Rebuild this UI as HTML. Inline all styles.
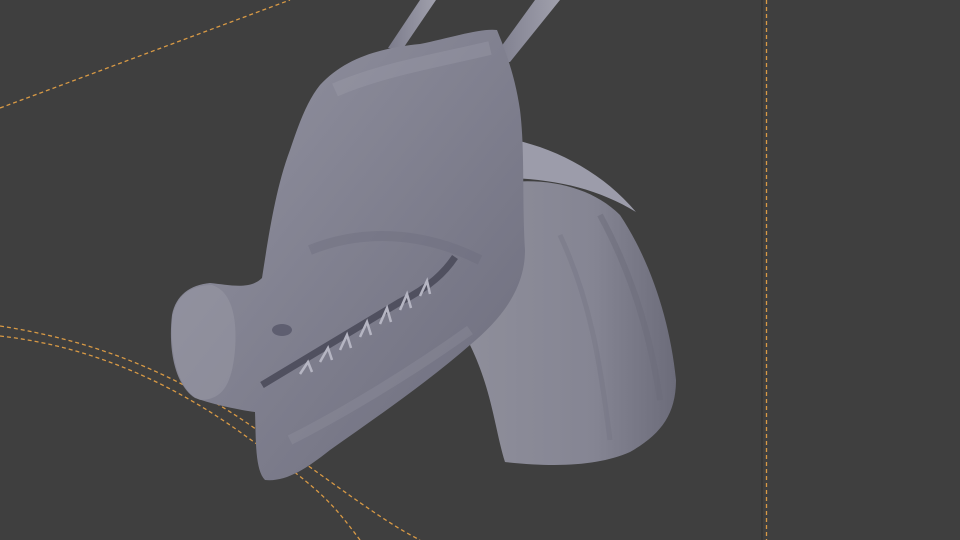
<!DOCTYPE html>
<html><head><meta charset="utf-8"><style>
html,body{margin:0;padding:0;background:#3f3f3f;width:960px;height:540px;overflow:hidden}
</style></head><body>
<svg width="960" height="540" viewBox="0 0 960 540" xmlns="http://www.w3.org/2000/svg">
<defs>
<linearGradient id="g" x1="0" y1="0" x2="1" y2="1">
<stop offset="0" stop-color="#9494a2"/><stop offset="0.5" stop-color="#80808f"/><stop offset="1" stop-color="#6c6c7c"/>
</linearGradient>
<linearGradient id="n" x1="0" y1="0" x2="1" y2="0">
<stop offset="0" stop-color="#8e8e9a"/><stop offset="0.6" stop-color="#858593"/><stop offset="1" stop-color="#6c6c7a"/>
</linearGradient>
<linearGradient id="h" x1="0" y1="0" x2="1" y2="0">
<stop offset="0" stop-color="#7c7c8c"/><stop offset="1" stop-color="#a0a0ac"/>
</linearGradient>
</defs>
<rect width="960" height="540" fill="#3f3f3f"/>
<line x1="762" y1="0" x2="762" y2="540" stroke="#343434" stroke-width="1.5"/>
<line x1="766.5" y1="0" x2="766.5" y2="540" stroke="#d99a45" stroke-width="1.3" stroke-dasharray="4,3"/>
<path d="M0,108 L290,0" stroke="#d99a45" stroke-width="1.3" stroke-dasharray="4,3" fill="none"/>
<path d="M0,326 C90,340 170,370 250,425 S380,520 420,540" stroke="#d99a45" stroke-width="1.3" stroke-dasharray="4,3" fill="none"/>
<path d="M0,336 C80,345 160,375 240,432 S330,500 360,540" stroke="#d99a45" stroke-width="1.3" stroke-dasharray="4,3" fill="none"/>
<path d="M388,48 L420,0 L436,0 L402,50 Z" fill="url(#h)"/>
<path d="M490,62 L535,0 L560,0 L510,62 Z" fill="url(#h)"/>
<path d="M490,185 C540,175 590,185 620,215 C650,260 670,320 676,380 C676,415 660,435 630,452 C600,465 560,468 505,462 C495,430 492,390 470,345 Z" fill="url(#n)"/>
<path d="M600,215 C630,270 650,330 660,400" stroke="#6c6c7a" stroke-width="6" fill="none" opacity="0.5"/>
<path d="M560,235 C590,300 600,360 610,440" stroke="#747482" stroke-width="5" fill="none" opacity="0.4"/>
<path d="M515,140 C560,150 605,175 636,212 C600,190 560,180 512,178 Z" fill="#9c9caa"/>
<path d="M320,85 C345,58 380,48 420,44 C450,38 480,28 497,30 C505,50 515,75 520,110 C525,150 522,200 525,250 C525,290 500,320 470,345 C430,380 380,415 330,450 C305,470 285,482 265,480 C255,470 256,440 255,412 C240,410 215,405 195,398 C175,385 168,350 172,315 C176,295 190,285 210,283 C230,285 250,290 262,278 C268,240 275,190 290,150 C300,120 308,100 320,85 Z" fill="url(#g)"/>
<path d="M172,320 C175,295 192,285 212,285 C228,290 238,310 235,350 C232,385 222,400 200,400 C180,392 170,360 172,320 Z" fill="#9a9aa6" opacity="0.5"/>
<path d="M335,90 C380,70 440,60 490,48" stroke="#a2a2ae" stroke-width="14" fill="none" opacity="0.3"/>
<ellipse cx="282" cy="330" rx="10" ry="6" fill="#5e5e70"/>
<path d="M262,385 C300,362 350,332 400,302 C430,287 445,272 455,257" stroke="#50505f" stroke-width="7" fill="none"/>
<path d="M300,374 l8,-12 l4,10 M320,362 l8,-14 l4,12 M340,350 l7,-15 l4,13 M360,337 l7,-15 l4,13 M380,324 l7,-16 l4,14 M400,310 l7,-16 l4,14 M420,296 l7,-15 l3,13" stroke="#b5b5c2" stroke-width="2.5" fill="none"/>
<path d="M310,250 C360,230 420,230 480,260" stroke="#6a6a7a" stroke-width="10" fill="none" opacity="0.35"/>
<path d="M290,440 C330,420 400,380 470,330" stroke="#9c9ca8" stroke-width="10" fill="none" opacity="0.25"/>
</svg>
</body></html>
